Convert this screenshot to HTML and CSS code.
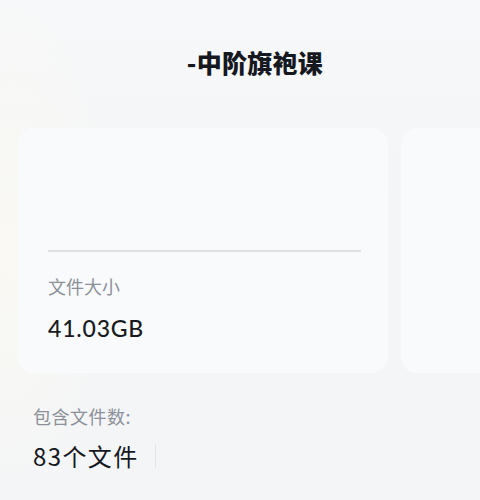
FILE: index.html
```html
<!DOCTYPE html>
<html lang="zh">
<head>
<meta charset="utf-8">
<link rel="stylesheet" href="styles.css">
</head>
<body>
<div class="page">
  <header class="header">
    <h1 class="title">-中阶旗袍课</h1>
  </header>
  <div class="carousel">
    <div class="card">
      <div class="card-top"></div>
      <div class="divider"></div>
      <div class="label">文件大小</div>
      <div class="size">41.03GB</div>
    </div>
    <div class="card card-next"></div>
  </div>
  <section class="count">
    <div class="count-label">包含文件数:</div>
    <div class="count-row">
      <span class="count-value">83个文件</span>
      <span class="vline"></span>
    </div>
  </section>
</div>
</body>
</html>
```

FILE: styles.css
```css
html, body {
  margin: 0;
  padding: 0;
}
body {
  width: 480px;
  height: 500px;
  overflow: hidden;
  background: radial-gradient(ellipse 110px 260px at 10px 250px, #faf9f3 0%, rgba(250,249,243,0) 100%), linear-gradient(#f7f8f9, #f4f5f7 40%);
  font-family: "Noto Sans CJK SC", "Noto Sans", sans-serif;
}
.page {
  display: flex;
  flex-direction: column;
}
.header {
  height: 128px;
  display: flex;
  justify-content: center;
  padding-top: 44px;
  box-sizing: border-box;
}
.title {
  margin: 0 0 0 30px;
  font-size: 25px;
  line-height: 36px;
  font-weight: 900;
  color: #15181f;
  letter-spacing: 0.3px;
}
.carousel {
  display: flex;
  gap: 13px;
  padding-left: 18px;
  overflow: hidden;
}
.card {
  flex: 0 0 370px;
  height: 245px;
  background: #f9fafc;
  border-radius: 16px;
  padding: 0 27px 0 30px;
  box-sizing: border-box;
  display: flex;
  flex-direction: column;
}
.card-next {
  flex: 0 0 100px;
  padding: 0;
}
.card-top {
  height: 122px;
}
.divider {
  height: 2px;
  background: #dfe0e3;
}
.label {
  margin-top: 22px;
  font-size: 18px;
  line-height: 25px;
  color: #8b9099;
}
.size {
  margin-top: 14px;
  font-family: "Lato", "Noto Sans", sans-serif;
  font-size: 23px;
  line-height: 30px;
  font-weight: 500;
  color: #171a21;
  letter-spacing: 0.8px;
}
.count {
  padding: 31px 0 0 33px;
}
.count-label {
  font-size: 18px;
  line-height: 25px;
  color: #8b9099;
  letter-spacing: 0.5px;
}
.count-row {
  margin-top: 11px;
  display: flex;
  align-items: center;
  gap: 16px;
}
.count-value {
  font-size: 24px;
  line-height: 32px;
  color: #15181f;
  letter-spacing: 1.4px;
}
.vline {
  width: 1px;
  height: 24px;
  background: #e3e4e7;
}
```
